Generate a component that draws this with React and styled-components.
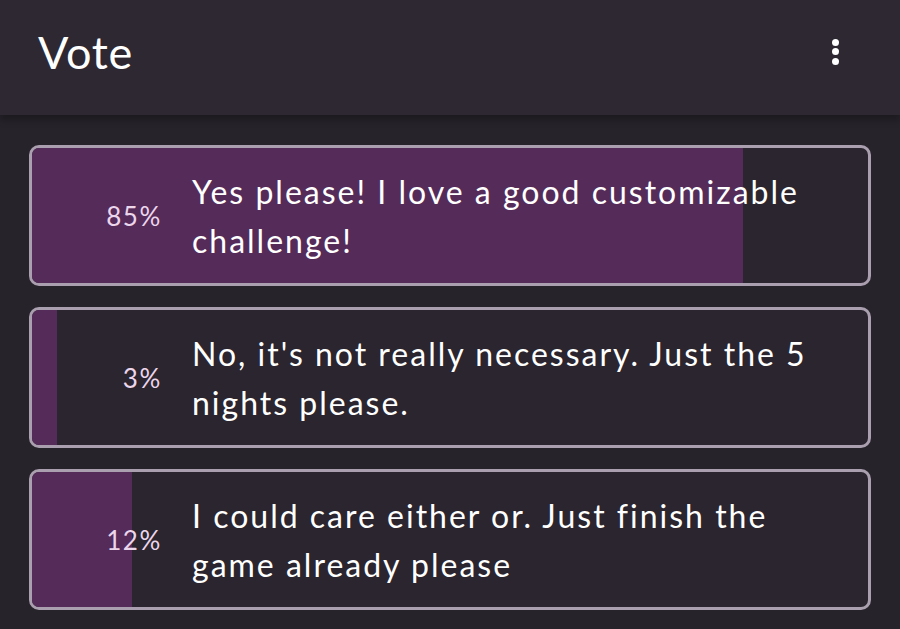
import React from 'react'
import styled, { createGlobalStyle } from "styled-components";

const Global = createGlobalStyle`
  html, body {
    margin: 0;
    padding: 0;
    background: #27232b;
    font-family: Lato, "Open Sans", sans-serif;
  }
`;

const Page = styled.div`
  width: 900px;
  height: 629px;
  overflow: hidden;
  background: #27232b;
`;

const Header = styled.header`
  height: 115px;
  background: #2d2832;
  display: flex;
  align-items: center;
  justify-content: space-between;
  padding: 0 61px 0 38px;
  box-shadow: 0 5px 7px rgba(0, 0, 0, 0.3);
  position: relative;
  z-index: 1;
`;

const Title = styled.h1`
  margin: 0 0 12px 0;
  font-size: 45px;
  font-weight: 400;
  color: #ffffff;
  letter-spacing: 0.8px;
`;

const Menu = styled.div`
  display: flex;
  flex-direction: column;
  gap: 2.5px;
  margin-bottom: 12px;
  span {
    width: 7px;
    height: 7px;
    border-radius: 50%;
    background: #ffffff;
  }
`;

const List = styled.div`
  display: flex;
  flex-direction: column;
  gap: 21px;
  padding: 30px 29px 0 29px;
`;

const Option = styled.div`
  position: relative;
  height: 141px;
  box-sizing: border-box;
  border: 3px solid #a99fae;
  border-radius: 10px;
  overflow: hidden;
  background: #2a252e;
`;

const Fill = styled.div`
  position: absolute;
  left: 0;
  top: 0;
  bottom: 0;
  background: #552b5a;
`;

const Row = styled.div`
  position: relative;
  height: 100%;
  display: flex;
  align-items: center;
  gap: 30px;
`;

const Percent = styled.div`
  width: 130px;
  flex: none;
  text-align: right;
  font-size: 26px;
  font-weight: 400;
  letter-spacing: 1.6px;
  color: #ecd6ec;
`;

const Text = styled.div`
  flex: 1;
  font-size: 32px;
  font-weight: 400;
  letter-spacing: 2px;
  line-height: 49px;
  color: #ffffff;
  padding-right: 38px;
`;

const options = [
  { pct: 85, text: "Yes please! I love a good customizable challenge!" },
  { pct: 3, text: "No, it's not really necessary. Just the 5 nights please." },
  { pct: 12, text: "I could care either or. Just finish the game already please" },
];

export default function App() {
  return (
    <Page>
      <Global />
      <Header>
        <Title>Vote</Title>
        <Menu><span /><span /><span /></Menu>
      </Header>
      <List>
        {options.map((o) => (
          <Option key={o.pct}>
            <Fill style={{ width: `${o.pct}%` }} />
            <Row>
              <Percent>{o.pct}%</Percent>
              <Text>{o.text}</Text>
            </Row>
          </Option>
        ))}
      </List>
    </Page>
  )
}
